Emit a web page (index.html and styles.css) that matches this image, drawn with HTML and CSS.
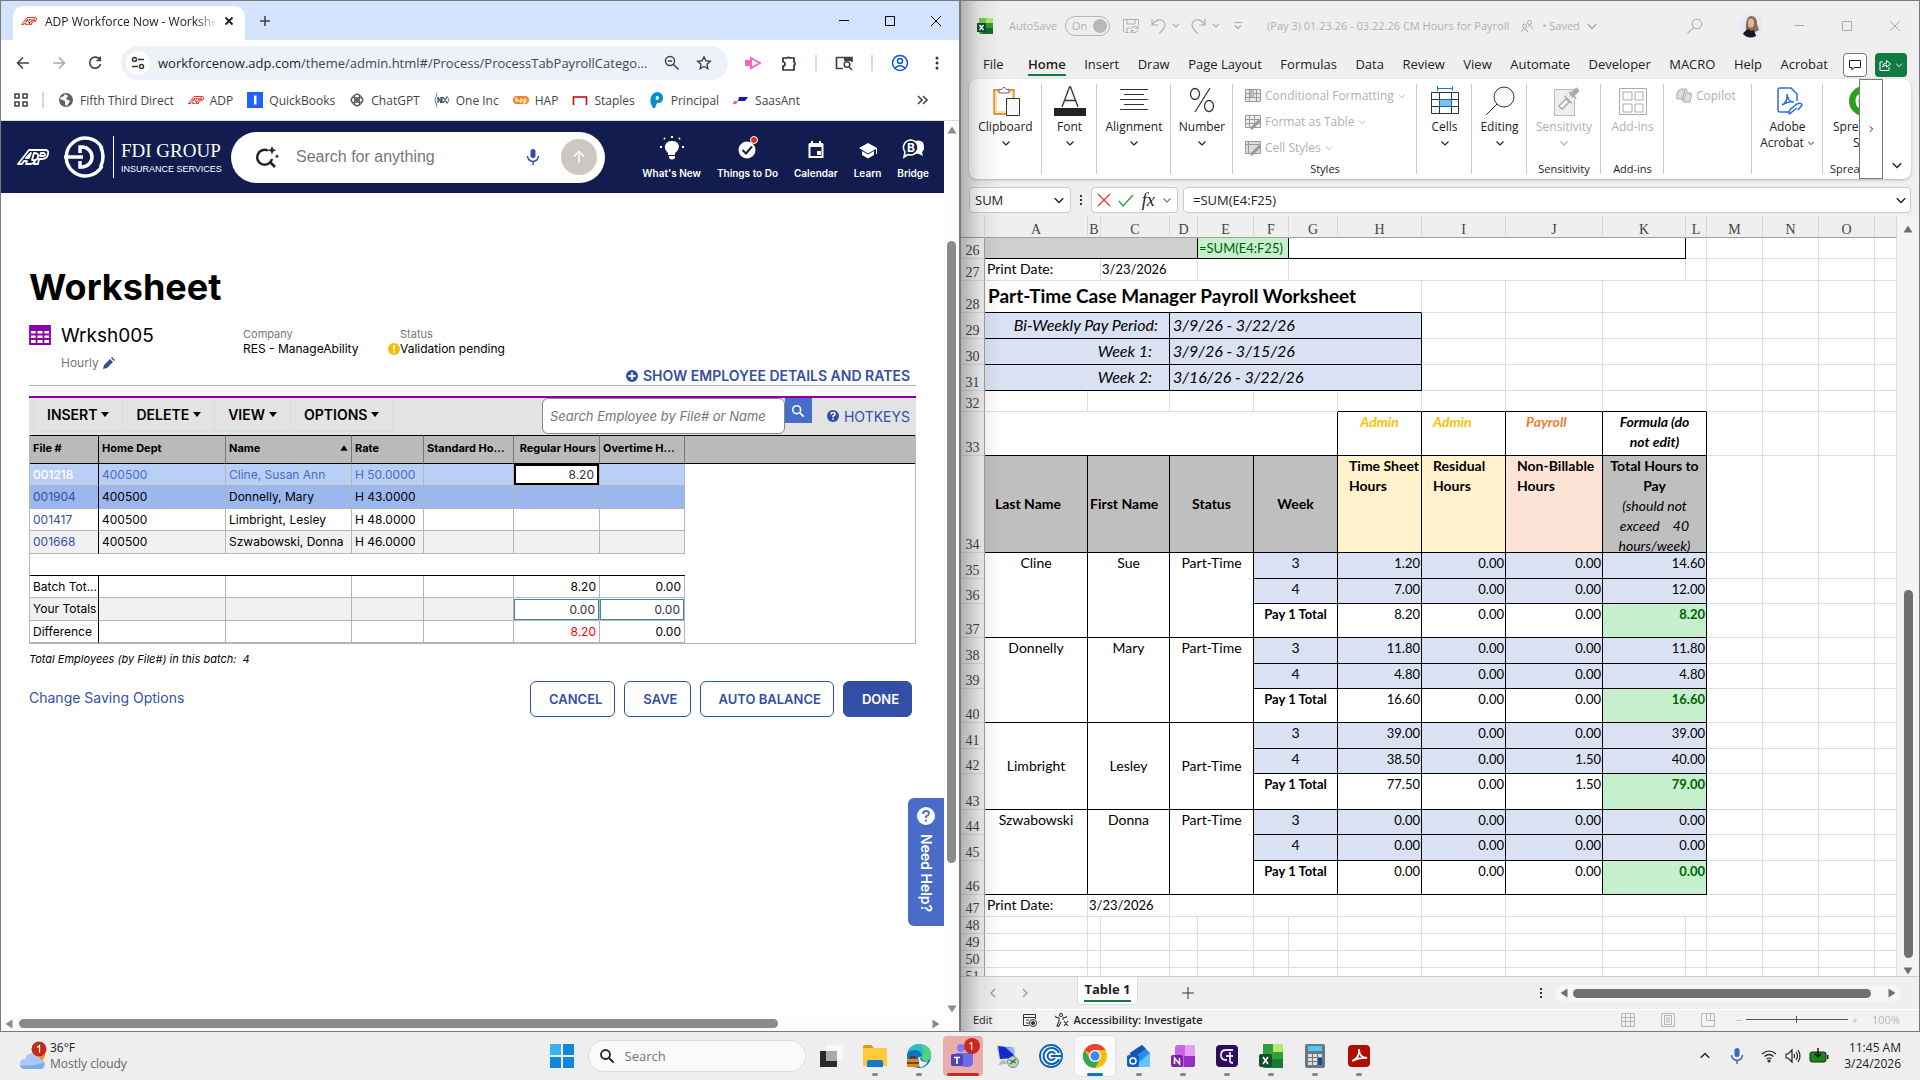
FILE: index.html
```html
<!DOCTYPE html>
<html lang="en">
<head>
<meta charset="utf-8">
<title>ADP Workforce Now - Worksheet</title>
<link rel="stylesheet" href="styles.css">
</head>
<body>
<svg class="defs" aria-hidden="true">
  <symbol id="chev" viewBox="0 0 10 10"><path d="M1.500 3.500 5 7l3.500-3.500" fill="none" stroke="currentColor" stroke-width="1.200"/></symbol>
  <symbol id="adp" viewBox="0 0 32 18"><path d="M1 16 12 2h16q4 0 3 4-1 5-6 5h-3l-1 5h-4l1-3q-2 3-5 3H9l1-3H7l-2 3zM9 10h3l2-5zM15 12q5 1 6-3t-4-4zM23 8h3q2 0 2-1.500T26 5h-2z" fill="none" stroke="currentColor" stroke-width="1.800" stroke-linejoin="round"/></symbol>
  <symbol id="lens" viewBox="0 0 16 16"><circle cx="6.500" cy="6.500" r="4.500" fill="none" stroke="currentColor" stroke-width="1.800"/><path d="m10 10 4.500 4.500" stroke="currentColor" stroke-width="2"/></symbol>
  <symbol id="mic" viewBox="0 0 16 18"><rect x="5.500" y="1" width="5" height="9" rx="2.500" fill="currentColor"/><path d="M2.500 8a5.500 5.500 0 0 0 11 0M8 13.500V17" fill="none" stroke="currentColor" stroke-width="1.500"/></symbol>
  <symbol id="tri" viewBox="0 0 10 10"><path d="M5 1.500 9.500 8.500h-9z" fill="currentColor"/></symbol>
</svg>
<main class="desktop">

<section class="window chrome">
  <div class="tabstrip">
    <div class="tab">
      <svg class="i16 red"><use href="#adp"/></svg>
      <span class="tab-title">ADP Workforce Now - Worksheet</span>
      <button class="plain" aria-label="Close tab"><svg class="i16" viewBox="0 0 16 16"><path d="m4.500 4.500 7 7m0-7-7 7" stroke="#202124" stroke-width="1.800"/></svg></button>
    </div>
    <button class="plain newtab" aria-label="New tab"><svg class="i16" viewBox="0 0 16 16"><path d="M8 3v10M3 8h10" stroke="#444" stroke-width="1.600"/></svg></button>
    <div class="winbtns">
      <button class="plain" aria-label="Minimize"><svg class="i12" viewBox="0 0 12 12"><path d="M1 5.500h10" stroke="#000"/></svg></button>
      <button class="plain" aria-label="Maximize"><svg class="i12" viewBox="0 0 12 12"><path d="M1.500 1.500h9v9h-9z" fill="none" stroke="#000"/></svg></button>
      <button class="plain" aria-label="Close"><svg class="i12" viewBox="0 0 12 12"><path d="m1 1 10 10M11 1 1 11" stroke="#000"/></svg></button>
    </div>
  </div>
  <div class="toolbar">
    <button class="plain" aria-label="Back"><svg class="i16" viewBox="0 0 16 16"><path d="M14 8H3m5-5.500L2.500 8 8 13.500" fill="none" stroke="#444" stroke-width="1.600"/></svg></button>
    <button class="plain" aria-label="Forward"><svg class="i16" viewBox="0 0 16 16"><path d="M2 8h11M8 2.500 13.500 8 8 13.500" fill="none" stroke="#aaa" stroke-width="1.600"/></svg></button>
    <button class="plain" aria-label="Reload"><svg class="i16" viewBox="0 0 16 16"><path d="M13 5a5.500 5.500 0 1 0 .5 4M13.300 1.500v4h-4" fill="none" stroke="#444" stroke-width="1.700"/></svg></button>
    <div class="omnibox">
      <span class="site"><svg class="i16" viewBox="0 0 16 16"><g fill="none" stroke="#333" stroke-width="1.500"><circle cx="4.500" cy="4.500" r="2"/><circle cx="11.500" cy="11.500" r="2"/><path d="M8 4.500h6M2 11.500h6"/></g></svg></span>
      <a class="url" href="#"><b>workforcenow.adp.com</b>/theme/admin.html#/Process/ProcessTabPayrollCatego...</a>
      <svg class="i16" viewBox="0 0 16 16"><circle cx="6" cy="6" r="4.500" fill="none" stroke="#444" stroke-width="1.500"/><path d="m9.500 9.500 5 5M4 6h4" stroke="#444" stroke-width="1.600"/></svg>
      <svg class="i16" viewBox="0 0 16 16"><path d="m8 1.800 1.900 4 4.400.500-3.300 3 .900 4.400L8 11.500l-3.900 2.200.900-4.400-3.300-3 4.400-.500z" fill="none" stroke="#444" stroke-width="1.400"/></svg>
    </div>
    <svg class="i16" viewBox="0 0 16 16"><path d="M0 5h6v6H0z" fill="#ff62c0"/><path d="m6 3 9 5-9 5z" fill="#fff" stroke="#ff62c0" stroke-width="2"/></svg>
    <svg class="i16" viewBox="0 0 16 16"><path d="M2 3h4a2 1.500 0 0 1 3 0h4v4a1.500 1.800 0 0 1 0 3.500V15H2v-4a1.800 1.800 0 0 0 0-4z" fill="none" stroke="#333" stroke-width="1.700"/></svg>
    <i class="vsep"></i>
    <svg class="i18" viewBox="0 0 18 16"><path d="M8 13.500H1.500v-11H17V7" fill="none" stroke="#444" stroke-width="1.700"/><path d="M9 2h8v4H9z" fill="#444"/><circle cx="12" cy="9.500" r="2.800" fill="none" stroke="#444" stroke-width="1.500"/><path d="m14 12 3 3" stroke="#444" stroke-width="1.600"/></svg>
    <i class="vsep"></i>
    <svg class="i18" viewBox="0 0 18 18"><g fill="none" stroke="#0b57d0" stroke-width="1.500"><circle cx="9" cy="9" r="7.500"/><circle cx="9" cy="7" r="2.500"/><path d="M4 14q5-4.500 10 0"/></g></svg>
    <svg class="i16" viewBox="0 0 16 16" fill="#333"><circle cx="8" cy="3" r="1.500"/><circle cx="8" cy="8" r="1.500"/><circle cx="8" cy="13" r="1.500"/></svg>
  </div>
  <nav class="bookmarks">
    <svg class="i14" viewBox="0 0 14 14"><path d="M1 1h4v4H1zM9 1h4v4H9zM1 9h4v4H1zM9 9h4v4H9z" fill="none" stroke="#444" stroke-width="1.600"/></svg>
    <i class="vsep"></i>
    <a href="#"><svg class="i16" viewBox="0 0 16 16"><circle cx="8" cy="8" r="7" fill="#5f6368"/><path d="M3 5q3 0 4-3l3 2-2 3 4 2-3 5-2-1V9L2 7z" fill="#fff"/></svg>Fifth Third Direct</a>
    <a href="#"><svg class="i16 red"><use href="#adp"/></svg>ADP</a>
    <a href="#"><svg class="i16" viewBox="0 0 16 16"><path d="M0 0h16v16H0z" fill="#2260ff"/><path d="M7 3.500h2.500v9H7z" fill="#fff"/></svg>QuickBooks</a>
    <a href="#"><svg class="i16" viewBox="0 0 16 16" fill="none" stroke="#555" stroke-width="1.100"><ellipse cx="8" cy="5.500" rx="2.500" ry="3.500"/><ellipse cx="8" cy="10.500" rx="2.500" ry="3.500"/><ellipse cx="5.500" cy="8" rx="3.500" ry="2.500"/><ellipse cx="10.500" cy="8" rx="3.500" ry="2.500"/><circle cx="8" cy="8" r="5.500"/></svg>ChatGPT</a>
    <a href="#"><svg class="i16" viewBox="0 0 16 16" fill="none" stroke="#4a86b8"><path d="M3 1 1 8l2 7M13 4l2 4-2 4"/><path d="M4 11V5l3 6V5m1 6V5m1 0 4 6m0-6-4 6" stroke-width="1.300" stroke="#456"/></svg>One Inc</a>
    <a href="#"><svg class="i16" viewBox="0 0 16 16"><rect y="4" width="16" height="8" rx="4" fill="#f58220"/><path d="M3 5v5m0-2q2-2 2 0v2m3-2h-1v2h2V7H7m4 5V7h2v3h-2" fill="none" stroke="#fff"/></svg>HAP</a>
    <a href="#"><svg class="i16" viewBox="0 0 16 16"><path d="M1.500 13V5h13v8" fill="none" stroke="#c00" stroke-width="1.500"/></svg>Staples</a>
    <a href="#"><svg class="i16" viewBox="0 0 16 16"><path d="M4 16Q0 10 2 5q2-5 7-5 5 1 5 6t-5 5H8l-2 5zM8 4q-2 0-1 4 3 0 3-2 0-2-2-2" fill="#0091cd" fill-rule="evenodd"/></svg>Principal</a>
    <a href="#"><svg class="i16" viewBox="0 0 16 16"><path d="M6 5h9l-3 4H5z" fill="#11c"/><path d="M1 9h4l-2 3H0z" fill="#ff4fb0"/></svg>SaasAnt</a>
    <svg class="i16 more" viewBox="0 0 16 16"><path d="m3 4 4 4-4 4m5-8 4 4-4 4" fill="none" stroke="#444" stroke-width="1.600"/></svg>
  </nav>

  <div class="viewport">
    <div class="page">
      <header class="adphead">
        <svg class="adplogo"><use href="#adp"/></svg>
        <svg class="fdi" viewBox="0 0 42 42"><g fill="none" stroke="#fff"><path d="M38 12A19 19 0 1 0 38 30M36.500 10q5 11 0 21" stroke-width="3.500"/><path d="M0 21h19M16 17v-6h2a10 10 0 0 1 0 20h-2v-6" stroke-width="3.500"/></g></svg>
        <div class="brand"><strong>FDI GROUP</strong><span>INSURANCE SERVICES</span></div>
        <div class="asksearch">
          <svg class="i24" viewBox="0 0 24 24"><path d="M13 5.500A7.500 7.500 0 1 0 17 14M15 17l5 5" fill="none" stroke="#222" stroke-width="2.500"/><path d="m17 1 1.200 3 3 1.200-3 1.200L17 9.500l-1.200-3.100-3-1.200 3-1.200zM22 9l.7 1.500 1.300.7-1.300.7L22 13.500l-.7-1.600-1.300-.7 1.300-.7z" fill="#222"/></svg>
          <input type="text" placeholder="Search for anything" aria-label="Search for anything">
          <svg class="askmic"><use href="#mic"/></svg>
          <button class="go" aria-label="Submit"><svg class="i16" viewBox="0 0 16 16"><path d="M8 14V3M3 7.500l5-5 5 5" fill="none" stroke="#fff" stroke-width="1.500"/></svg></button>
        </div>
        <nav class="headnav">
          <a href="#"><svg class="i26" viewBox="0 0 26 26"><path d="M9 18Q5 14 6 11q1-5 7-5t7 5q0 4-4 7v2H9zM10 21h6v2q-3 3-6 0z" fill="#fff"/><path d="M13 1v2M5 3l1 1M21 3l-1 1M1 12h2M23 12h2" stroke="#fff" stroke-width="2"/></svg>What's New</a>
          <a href="#"><svg class="i26" viewBox="0 0 26 26"><circle cx="13" cy="15" r="8.500" fill="#fff"/><path d="m8.500 15 3.500 3.500 6-7" fill="none" stroke="#131c4e" stroke-width="2"/><circle cx="20" cy="5" r="3.500" fill="#d2321e" stroke="#fff"/></svg>Things to Do</a>
          <a href="#"><svg class="i26" viewBox="0 0 26 26"><path d="M6.500 10h13v12h-13z" fill="none" stroke="#fff" stroke-width="2"/><path d="M6 8h14v4H6zM8 6h2v3H8zM16 6h2v3h-2zM14 16h4v4h-4z" fill="#fff"/></svg>Calendar</a>
          <a href="#"><svg class="i26" viewBox="0 0 26 26"><path d="m4 13 9-5 9 5v6h-1v-5l-8 4.500zM7 16l6 3.500 6-3.500v4l-6 3.500L7 20z" fill="#fff"/></svg>Learn</a>
          <a href="#"><svg class="i26" viewBox="0 0 26 26"><path d="M15 6q9-2 9 6 0 4-2 5l1 4-4-2-5-1z" fill="#fff"/><path d="M11 5a7.500 7.500 0 1 1-3 14.500L4 22l1-5A7.500 7.500 0 0 1 11 5z" fill="#131c4e" stroke="#fff" stroke-width="1.600"/><text x="11" y="17" text-anchor="middle" font-family="Inter,sans-serif" font-weight="700" font-size="12" fill="#fff">B</text></svg>Bridge</a>
        </nav>
      </header>
      <div class="content">
        <h1>Worksheet</h1>
        <div class="meta">
          <svg class="sheeticon" viewBox="0 0 22 20"><path d="M1 1h20v18H1zM1 5h20M1 9.500h20M1 14h20M7.500 3v16M14.500 3v16" fill="none" stroke="#8a00a8" stroke-width="1.800"/><path d="M1 1h20v3H1z" fill="#8a00a8"/></svg>
          <div class="wname"><h2>Wrksh005</h2><p>Hourly <svg class="i12" viewBox="0 0 12 12"><path d="m0 12 1-4 6-6 3 3-6 6zM8 1l1-1 3 3-1 1z" fill="#334fa5"/></svg></p></div>
          <dl class="company"><dt>Company</dt><dd>RES - ManageAbility</dd></dl>
          <dl class="status"><dt>Status</dt><dd><svg class="warn" viewBox="0 0 12 12"><circle cx="6" cy="6" r="6" fill="#fbb900"/><path d="M6 2v5M6 8v2" stroke="#fff" stroke-width="1.800"/></svg>Validation pending</dd></dl>
        </div>
        <div class="showrow"><a href="#"><svg class="i12" viewBox="0 0 12 12"><circle cx="6" cy="6" r="6" fill="#334fa5"/><path d="M6 2.500v7M2.500 6h7" stroke="#fff" stroke-width="1.800"/></svg>SHOW EMPLOYEE DETAILS AND RATES</a></div>
        <div class="gridbar">
          <button>INSERT<i></i></button><button>DELETE<i></i></button><button>VIEW<i></i></button><button>OPTIONS<i></i></button>
          <input type="text" placeholder="Search Employee by File# or Name" aria-label="Search employee">
          <button class="find" aria-label="Search"><svg class="i14"><use href="#lens"/></svg></button>
          <a href="#"><svg class="i12" viewBox="0 0 12 12"><circle cx="6" cy="6" r="6" fill="#334fa5"/><path d="M4 4.500q0-2 2-2t2 1.700Q8 5.300 6.100 6v1.200M6 8.300v1.500" fill="none" stroke="#fff" stroke-width="1.500"/></svg>HOTKEYS</a>
        </div>
        <div class="gridbox">
          <table class="wtable">
            <colgroup><col class="w1"><col class="w2"><col class="w3"><col class="w4"><col class="w5"><col class="w6"><col class="w7"><col></colgroup>
            <thead><tr><th>File #</th><th>Home Dept</th><th><span class="sort">Name<svg class="i8"><use href="#tri"/></svg></span></th><th>Rate</th><th>Standard Ho...</th><th class="r">Regular Hours</th><th>Overtime H...</th><th></th></tr></thead>
            <tbody>
            <tr class="sel"><td><a href="#">001218</a></td><td>400500</td><td>Cline, Susan Ann</td><td>H 50.0000</td><td></td><td class="edit"><input type="text" value="8.20" aria-label="Regular hours"></td><td></td></tr>
            <tr class="hov"><td><a href="#">001904</a></td><td>400500</td><td>Donnelly, Mary</td><td>H 43.0000</td><td></td><td></td><td></td></tr>
            <tr><td><a href="#">001417</a></td><td>400500</td><td>Limbright, Lesley</td><td>H 48.0000</td><td></td><td></td><td></td></tr>
            <tr class="alt"><td><a href="#">001668</a></td><td>400500</td><td>Szwabowski, Donna</td><td>H 46.0000</td><td></td><td></td><td></td></tr>
            <tr class="blank"><td colspan="7"></td></tr>
            <tr class="total"><td>Batch Tot...</td><td></td><td></td><td></td><td></td><td class="r">8.20</td><td class="r">0.00</td></tr>
            <tr class="alt"><td>Your Totals</td><td></td><td></td><td></td><td></td><td class="mine"><input type="text" value="0.00" aria-label="Your regular total"></td><td class="mine"><input type="text" value="0.00" aria-label="Your overtime total"></td></tr>
            <tr><td>Difference</td><td></td><td></td><td></td><td></td><td class="r neg">8.20</td><td class="r">0.00</td></tr>
            </tbody>
          </table>
        </div>
        <p class="count">Total Employees (by File#) in this batch:&nbsp; 4</p>
        <div class="actions"><a href="#">Change Saving Options</a><button>CANCEL</button><button>SAVE</button><button>AUTO BALANCE</button><button class="primary">DONE</button></div>
      </div>
      <button class="help"><svg class="i18" viewBox="0 0 18 18"><circle cx="9" cy="9" r="9" fill="#fff"/><path d="M6 7q0-3 3-3t3 2.500Q12 8 9 9.500V11M9 12.500v2" fill="none" stroke="#486cc8" stroke-width="1.800"/></svg><span>Need Help?</span></button>
    </div>
    <div class="vbar"><svg class="i10"><use href="#tri"/></svg><i></i><svg class="i10 down"><use href="#tri"/></svg></div>
    <div class="hbar"><svg class="i10 left"><use href="#tri"/></svg><i></i><svg class="i10 right"><use href="#tri"/></svg></div>
  </div>
</section>

<section class="window excel">
  <div class="xtitle">
    <svg class="i16" viewBox="0 0 16 16"><path d="M2 2q0-2 2-2h12v16H4q-2 0-2-2z" fill="#2f9e3f"/><path d="M9 0h7v5H9z" fill="#b5e86a"/><path d="M2 0h7v5H2z" fill="#6fcf56"/><path d="M9 10h7v6H5z" fill="#146b2e"/><path d="M0 5h9v9H0z" fill="#10512c"/><path d="m2.500 7 4 5m0-5-4 5" stroke="#fff" stroke-width="1.400"/></svg>
    <label class="auto">AutoSave<span class="toggle">On<input type="checkbox" checked></span></label>
    <svg class="i16" viewBox="0 0 16 16" fill="none" stroke="#b0b0b0"><path d="M6 14.500H2L.500 13V1.500h15V7M4 2v4h8V2M4 14v-4h3"/><path d="M8 11q1-3 4-2.500 2 0 3 2m0-3v3h-3m3 1.500q-1 3-4 2.500-2 0-3-2m0 3v-3h3"/></svg>
    <svg class="undo" viewBox="0 0 28 16" fill="none" stroke="#b0b0b0" stroke-width="1.200"><path d="M1 1v6h6M1 7q4-6 9-5 4 1 4 5 0 3-6 9M22 6l3 3 3-3"/></svg>
    <svg class="undo" viewBox="0 0 28 16" fill="none" stroke="#b0b0b0" stroke-width="1.200"><path d="M14 1v6H8M14 7q-4-6-9-5-4 1-4 5 0 3 6 9M22 6l3 3 3-3"/></svg>
    <svg class="i10 qat" viewBox="0 0 10 10"><path d="M1 1.500h8M2 4.500l3 3 3-3" fill="none" stroke="#aaa" stroke-width="1.200"/></svg>
    <span class="doc">(Pay 3) 01.23.26 - 03.22.26 CM Hours for Payroll</span>
    <svg class="i12" viewBox="0 0 12 12" fill="none" stroke="#aaa"><circle cx="8.500" cy="2.500" r="2"/><circle cx="3.500" cy="6" r="2"/><path d="M.500 12q0-3 3-3t3 3M7 6q4-1 4.500 3"/></svg>
    <span class="saved">• Saved</span>
    <svg class="i12 pale"><use href="#chev"/></svg>
    <div class="xright">
      <svg class="i16" viewBox="0 0 16 16" fill="none" stroke="#b5b5b5" stroke-width="1.200"><circle cx="10" cy="6" r="4.800"/><path d="M6.500 9.500.500 15.500"/></svg>
      <svg class="avatar" viewBox="0 0 24 24"><circle cx="12" cy="12" r="12" fill="#e6e8f2"/><path d="M7 17Q6 3 12 2q6 0 6 8l2 6-4 2z" fill="#8b6a50"/><ellipse cx="12" cy="9" rx="3" ry="4.500" fill="#e6b79c"/><path d="M4 20q1-3 6-5l2 2 3-1 2 6q-7 4-13-2" fill="#11182c"/></svg>
      <button class="plain" aria-label="Minimize"><svg class="i12" viewBox="0 0 12 12"><path d="M1 5.500h10" stroke="#aaa"/></svg></button>
      <button class="plain" aria-label="Maximize"><svg class="i12" viewBox="0 0 12 12"><path d="M1.500 1.500h9v9h-9z" fill="none" stroke="#aaa"/></svg></button>
      <button class="plain" aria-label="Close"><svg class="i12" viewBox="0 0 12 12"><path d="m1 1 10 10M11 1 1 11" stroke="#aaa"/></svg></button>
    </div>
  </div>
  <div class="xmenu">
    <nav><a href="#" class="file">File</a><a href="#" class="on">Home</a><a href="#">Insert</a><a href="#">Draw</a><a href="#">Page Layout</a><a href="#">Formulas</a><a href="#">Data</a><a href="#">Review</a><a href="#">View</a><a href="#">Automate</a><a href="#">Developer</a><a href="#">MACRO</a><a href="#">Help</a><a href="#">Acrobat</a></nav>
    <button class="cmt" aria-label="Comments"><svg class="i12" viewBox="0 0 12 12"><path d="M.500 1.500h11v7H5L3 11V8.500H.500z" fill="none" stroke="#222"/></svg></button>
    <button class="share" aria-label="Share"><svg class="i12" viewBox="0 0 12 12"><path d="M4 3H1v8.500h9V8M3.500 8q0-4 4-4V1.500L11.500 5 7.500 8V6Q5 6 3.500 8z" fill="none" stroke="#fff"/></svg><svg class="i8"><use href="#chev"/></svg></button>
  </div>
  <div class="ribbon">
    <button class="g g1"><svg class="i30" viewBox="0 0 30 30"><path d="M3 4h20v24H3z" fill="#ffe1a0" stroke="#e07b10" stroke-width="1.300"/><path d="M6 7h14v18H6z" fill="#fff"/><path d="M8 7V3.500h2.500Q13-1 15.500 3.500H18V7z" fill="#fff" stroke="#666"/><path d="M15.500 12.500h13v17h-13z" fill="#f8f8f8" stroke="#333"/></svg>Clipboard<svg class="i10"><use href="#chev"/></svg></button>
    <button class="g g2"><svg class="i32" viewBox="0 0 32 30"><path d="m8 21 7.500-20h1L24 21M11 14.500h10" fill="none" stroke="#333" stroke-width="1.300"/><path d="M0 22h32v8H0z" fill="#222"/></svg>Font<svg class="i10"><use href="#chev"/></svg></button>
    <button class="g g3"><svg class="i30" viewBox="0 0 30 30"><path d="M1 3.500h28M5 8.500h20M1 13.500h28M5 18.500h20M1 23.500h28" stroke="#333"/></svg>Alignment<svg class="i10"><use href="#chev"/></svg></button>
    <button class="g g4"><svg class="i30" viewBox="0 0 30 30" fill="none" stroke="#333" stroke-width="1.300"><ellipse cx="8" cy="8" rx="4.500" ry="5.500"/><ellipse cx="22" cy="20" rx="4.500" ry="5.500"/><path d="M23 2 8 26"/></svg>Number<svg class="i10"><use href="#chev"/></svg></button>
    <div class="g g5">
      <button><svg class="i16" viewBox="0 0 16 16"><path d="M.500 1.500h15v12H.500zM.500 5.500h15m-15 4h15m-11-8v12m7-12v12" fill="#e8e8e8" stroke="#999"/><path d="M5 2h4v7H5z" fill="#bbb"/></svg>Conditional Formatting<svg class="i8"><use href="#chev"/></svg></button>
      <button><svg class="i16" viewBox="0 0 16 16"><path d="M.500 1.500h15v12H.500zM.500 5.500h15m-15 4h15m-11-8v12m5-12v12" fill="#eee" stroke="#999"/><path d="m6 15 9-9" stroke="#999" stroke-width="3"/></svg>Format as Table<svg class="i8"><use href="#chev"/></svg></button>
      <button><svg class="i16" viewBox="0 0 16 16"><path d="M.500 1.500h15v12H.500zM.500 4.500h15m-12-3v12" fill="#ddd" stroke="#999"/><path d="m6 15 9-9" stroke="#999" stroke-width="3"/></svg>Cell Styles<svg class="i8"><use href="#chev"/></svg></button>
      <span class="cap">Styles</span>
    </div>
    <button class="g g6"><svg class="i30" viewBox="0 0 30 30"><path d="M1.500 6.500h27v21h-27zM1.500 13.500h27m-27 7h27m-19-14v21m12-21v21" fill="#fff" stroke="#333"/><path d="M9.500 13.500h12v7h-12z" fill="#83bdec" stroke="#0f6cbd"/><path d="M7 2.500h16M7.500 0v5m15-5v5" stroke="#0f83bd"/></svg>Cells<svg class="i10"><use href="#chev"/></svg></button>
    <button class="g g7"><svg class="i30" viewBox="0 0 30 30" fill="none" stroke="#333"><circle cx="19" cy="11" r="10" fill="#fafafa"/><path d="M12 18 1 29"/></svg>Editing<svg class="i10"><use href="#chev"/></svg></button>
    <button class="g g8 off"><svg class="i30" viewBox="0 0 30 30"><path d="M5.500 3.500h20v26h-20z" fill="#eee" stroke="#bbb"/><path d="m18 8 7 7" stroke="#aaa" stroke-width="8"/><path d="m18 8 7 7" stroke="#eee" stroke-width="5"/><path d="m22 10 7-7" stroke="#aaa" stroke-width="5"/><path d="m11 22 8-8" stroke="#aaa" stroke-width="6"/><path d="m12 21 6-6" stroke="#fff" stroke-width="3"/></svg>Sensitivity<svg class="i10"><use href="#chev"/></svg><span class="cap">Sensitivity</span></button>
    <button class="g g9 off"><svg class="i30" viewBox="0 0 30 30"><path d="M1.500 2.500h27v26h-27zM5 6h9v8H5zM17 6h8v8h-8zM5 18h9v8H5zM17 18h8v8h-8z" fill="none" stroke="#aaa"/></svg>Add-ins<span class="cap">Add-ins</span></button>
    <div class="g g10"><button class="off"><svg class="i16" viewBox="0 0 16 16"><path d="M5 1h5l2 4h3q1 3-1 9H8l-2-3H1Q0 7 2 3zM6 11l3-9M10 5 7 14" fill="#ddd" stroke="#aaa"/></svg>Copilot</button></div>
    <button class="g g11"><svg class="i30" viewBox="0 0 30 30" fill="none" stroke="#2a6fe0" stroke-width="1.500"><path d="M16 26H7q-2 0-2-2V4q0-2 2-2h11l6 6v7"/><path d="M9 19q6-3 5-11 1 8 7 8-5-1-12 3"/><path d="m19 22 5-4q4-2 5 1l-4 5m-1-2-5 4q-3 3-3 1 0-3 4-6"/></svg>Adobe<span>Acrobat <svg class="i8"><use href="#chev"/></svg></span></button>
    <div class="g g12"><svg class="i30" viewBox="0 0 30 30"><circle cx="15" cy="15" r="15" fill="#2ca01c"/><path d="M14 9q-6 0-6 6t6 6" fill="none" stroke="#fff" stroke-width="3"/></svg><span>Spreadsheet</span><span class="l2">Sync</span><span class="cap">Spreadsheet</span></div>
    <button class="scroll" aria-label="More commands"><svg class="i8"><use href="#chev"/></svg></button>
    <button class="collapse" aria-label="Collapse ribbon"><svg class="i12"><use href="#chev"/></svg></button>
  </div>
  <div class="fbar">
    <div class="box name"><input type="text" value="SUM" aria-label="Name box"><svg class="i12"><use href="#chev"/></svg></div>
    <svg class="dots" viewBox="0 0 4 12" fill="#333"><path d="M1 1h2v2H1zM1 5h2v2H1zM1 9h2v2H1z"/></svg>
    <div class="box fx"><svg class="i14" viewBox="0 0 14 14"><path d="m1 1 12 12M13 1 1 13" stroke="#e33" stroke-width="1.200"/></svg><svg class="i16" viewBox="0 0 16 14"><path d="m1 8 4 5L15 2" fill="none" stroke="#2a9a4a" stroke-width="1.300"/></svg><em>fx</em><svg class="i10"><use href="#chev"/></svg></div>
    <div class="box formula"><input type="text" value="=SUM(E4:F25)" aria-label="Formula"><svg class="i12"><use href="#chev"/></svg></div>
  </div>
  <div class="sheetarea">
  <div class="sheet">
    <table class="xl">
      <colgroup><col class="c0"><col class="cA"><col class="cB"><col class="cC"><col class="cD"><col class="cE"><col class="cF"><col class="cG"><col class="cH"><col class="cH"><col class="cJ"><col class="cK"><col class="cL"><col class="cE"><col class="cE"><col class="cE"><col></colgroup>
      <thead><tr><th></th><th>A</th><th>B</th><th>C</th><th>D</th><th>E</th><th>F</th><th>G</th><th>H</th><th>I</th><th>J</th><th>K</th><th>L</th><th>M</th><th>N</th><th>O</th><th></th></tr></thead>
      <tbody>
      <tr class="h21"><th>26</th><td colspan="4" class="k lock"></td><td colspan="2" class="k green date">=SUM(E4:F25)</td><td colspan="5" class="k"></td><td></td><td></td><td></td><td></td><td></td></tr>
      <tr class="h22"><th>27</th><td colspan="2">Print Date:</td><td colspan="2" class="date">3/23/2026</td><td colspan="2"></td><td colspan="5"></td><td></td><td></td><td></td><td></td><td></td></tr>
      <tr class="h32"><th>28</th><td colspan="8" class="kb title">Part-Time Case Manager Payroll Worksheet</td><td></td><td></td><td colspan="2"></td><td></td><td></td><td></td><td></td></tr>
      <tr class="h26"><th>29</th><td colspan="3" class="k in per wk">Bi-Weekly Pay Period:</td><td colspan="5" class="k in per">3/9/26 - 3/22/26</td><td></td><td></td><td colspan="2"></td><td></td><td></td><td></td><td></td></tr>
      <tr class="h26"><th>30</th><td colspan="3" class="k in per wk wn">Week 1:</td><td colspan="5" class="k in per">3/9/26 - 3/15/26</td><td></td><td></td><td colspan="2"></td><td></td><td></td><td></td><td></td></tr>
      <tr class="h26"><th>31</th><td colspan="3" class="k in per wk wn">Week 2:</td><td colspan="5" class="k in per">3/16/26 - 3/22/26</td><td></td><td></td><td colspan="2"></td><td></td><td></td><td></td><td></td></tr>
      <tr class="h21"><th>32</th><td></td><td colspan="2"></td><td colspan="2"></td><td colspan="2"></td><td class="kb"></td><td class="kb"></td><td class="kb"></td><td colspan="2" class="kb"></td><td></td><td></td><td></td><td></td></tr>
      <tr class="h44"><th>33</th><td colspan="7" class="k"></td><td class="k who adm c">Admin</td><td class="k who adm p">Admin</td><td class="k who pay p">Payroll</td><td colspan="2" class="k who c">Formula (do<br>not edit)</td><td></td><td></td><td></td><td></td></tr>
      <tr class="h97"><th>34</th><td class="k hd">Last Name</td><td colspan="2" class="k hd l">First Name</td><td colspan="2" class="k hd">Status</td><td colspan="2" class="k hd">Week</td><td class="k top yel">Time Sheet<br>Hours</td><td class="k top yel">Residual<br>Hours</td><td class="k top pch">Non-Billable<br>Hours</td><td colspan="2" class="k top tot"><div>Total Hours to<br>Pay<br><i>(should not<br>exceed &nbsp; &nbsp;40<br>hours/week)</i></div></td><td></td><td></td><td></td><td></td></tr>
      <tr class="h26"><th>35</th><td rowspan="3" class="k c">Cline</td><td rowspan="3" colspan="2" class="k c">Sue</td><td rowspan="3" colspan="2" class="k c">Part-Time</td><td colspan="2" class="k in c">3</td><td class="k in n">1.20</td><td class="k in n">0.00</td><td class="k in n">0.00</td><td colspan="2" class="k in n">14.60</td><td></td><td></td><td></td><td></td></tr>
      <tr class="h25"><th>36</th><td colspan="2" class="k in c">4</td><td class="k in n">7.00</td><td class="k in n">0.00</td><td class="k in n">0.00</td><td colspan="2" class="k in n">12.00</td><td></td><td></td><td></td><td></td></tr>
      <tr class="h34"><th>37</th><td colspan="2" class="k c b">Pay 1 Total</td><td class="k n">8.20</td><td class="k n">0.00</td><td class="k n">0.00</td><td colspan="2" class="k n green b">8.20</td><td></td><td></td><td></td><td></td></tr>
      <tr class="h26"><th>38</th><td rowspan="3" class="k c over">Donnelly</td><td rowspan="3" colspan="2" class="k c over">Mary</td><td rowspan="3" colspan="2" class="k c">Part-Time</td><td colspan="2" class="k in c">3</td><td class="k in n">11.80</td><td class="k in n">0.00</td><td class="k in n">0.00</td><td colspan="2" class="k in n">11.80</td><td></td><td></td><td></td><td></td></tr>
      <tr class="h25"><th>39</th><td colspan="2" class="k in c">4</td><td class="k in n">4.80</td><td class="k in n">0.00</td><td class="k in n">0.00</td><td colspan="2" class="k in n">4.80</td><td></td><td></td><td></td><td></td></tr>
      <tr class="h34"><th>40</th><td colspan="2" class="k c b">Pay 1 Total</td><td class="k n">16.60</td><td class="k n">0.00</td><td class="k n">0.00</td><td colspan="2" class="k n green b">16.60</td><td></td><td></td><td></td><td></td></tr>
      <tr class="h26"><th>41</th><td rowspan="3" class="k c mid">Limbright</td><td rowspan="3" colspan="2" class="k c mid">Lesley</td><td rowspan="3" colspan="2" class="k c mid">Part-Time</td><td colspan="2" class="k in c">3</td><td class="k in n">39.00</td><td class="k in n">0.00</td><td class="k in n">0.00</td><td colspan="2" class="k in n">39.00</td><td></td><td></td><td></td><td></td></tr>
      <tr class="h25"><th>42</th><td colspan="2" class="k in c">4</td><td class="k in n">38.50</td><td class="k in n">0.00</td><td class="k in n">1.50</td><td colspan="2" class="k in n">40.00</td><td></td><td></td><td></td><td></td></tr>
      <tr class="h36"><th>43</th><td colspan="2" class="k c b">Pay 1 Total</td><td class="k n">77.50</td><td class="k n">0.00</td><td class="k n">1.50</td><td colspan="2" class="k n green b">79.00</td><td></td><td></td><td></td><td></td></tr>
      <tr class="h25"><th>44</th><td rowspan="3" class="k c over">Szwabowski</td><td rowspan="3" colspan="2" class="k c">Donna</td><td rowspan="3" colspan="2" class="k c">Part-Time</td><td colspan="2" class="k in c">3</td><td class="k in n">0.00</td><td class="k in n">0.00</td><td class="k in n">0.00</td><td colspan="2" class="k in n">0.00</td><td></td><td></td><td></td><td></td></tr>
      <tr class="h26"><th>45</th><td colspan="2" class="k in c">4</td><td class="k in n">0.00</td><td class="k in n">0.00</td><td class="k in n">0.00</td><td colspan="2" class="k in n">0.00</td><td></td><td></td><td></td><td></td></tr>
      <tr class="h34"><th>46</th><td colspan="2" class="k c b">Pay 1 Total</td><td class="k n">0.00</td><td class="k n">0.00</td><td class="k n">0.00</td><td colspan="2" class="k n green b">0.00</td><td></td><td></td><td></td><td></td></tr>
      <tr class="h22"><th>47</th><td>Print Date:</td><td colspan="2" class="date">3/23/2026</td><td colspan="2"></td><td colspan="2"></td><td></td><td></td><td></td><td colspan="2"></td><td></td><td></td><td></td><td></td></tr>
      <tr class="h17"><th>48</th><td></td><td></td><td></td><td></td><td></td><td></td><td></td><td></td><td></td><td></td><td></td><td></td><td></td><td></td><td></td><td></td></tr>
      <tr class="h17"><th>49</th><td></td><td></td><td></td><td></td><td></td><td></td><td></td><td></td><td></td><td></td><td></td><td></td><td></td><td></td><td></td><td></td></tr>
      <tr class="h17"><th>50</th><td></td><td></td><td></td><td></td><td></td><td></td><td></td><td></td><td></td><td></td><td></td><td></td><td></td><td></td><td></td><td></td></tr>
      <tr class="h17"><th>51</th><td></td><td></td><td></td><td></td><td></td><td></td><td></td><td></td><td></td><td></td><td></td><td></td><td></td><td></td><td></td><td></td></tr>
      </tbody>
    </table>
  </div>
  <div class="xvbar"><svg class="i10"><use href="#tri"/></svg><i></i><svg class="i10 down"><use href="#tri"/></svg></div>
  </div>
  <div class="tabsbar">
    <button class="plain" aria-label="Previous sheet"><svg class="i12" viewBox="0 0 12 12"><path d="M8 2 4 6l4 4" fill="none" stroke="#999" stroke-width="1.300"/></svg></button>
    <button class="plain" aria-label="Next sheet"><svg class="i12" viewBox="0 0 12 12"><path d="m4 2 4 4-4 4" fill="none" stroke="#999" stroke-width="1.300"/></svg></button>
    <a class="sheettab" href="#"><span>Table 1</span></a>
    <button class="plain addsheet" aria-label="Add sheet"><svg class="i12" viewBox="0 0 12 12"><path d="M6 0v12M0 6h12" stroke="#333"/></svg></button>
    <svg class="dots" viewBox="0 0 4 12" fill="#333"><path d="M1 1h2v2H1zM1 5h2v2H1zM1 9h2v2H1z"/></svg>
    <div class="xhbar"><svg class="i10 left"><use href="#tri"/></svg><i></i><svg class="i10 right"><use href="#tri"/></svg></div>
  </div>
  <div class="statusbar">
    <span>Edit</span>
    <svg class="i14" viewBox="0 0 14 14" fill="none" stroke="#333"><path d="M6 12.500H.500v-11h12V6M.500 4.500h12M3 7h3M3 10h3"/><circle cx="10" cy="10" r="3.500"/><circle cx="10" cy="10" r="1.500" fill="#333"/></svg>
    <svg class="i14" viewBox="0 0 14 14" fill="none" stroke="#333" stroke-width="1.100"><circle cx="6" cy="2" r="1.500"/><path d="M1 3q-1 1 1 1.500l2 .500v3l-2 5 1.500.500L6 9m5-6q1 1-1 1.500L8 5v2M9 8l4 5m0-5-4 5"/></svg>
    <b>Accessibility: Investigate</b>
    <div class="views">
      <svg class="i14" viewBox="0 0 14 14" fill="none" stroke="#b5b5b5"><path d="M.500.500h13v13H.500zM.500 4.500h13m-13 4h13M4.500.500v13m5-13v13"/></svg>
      <svg class="i14" viewBox="0 0 14 14" fill="none" stroke="#b5b5b5"><path d="M.500.500h13v13H.500zM3.500 2.500h7v9h-7zM5 5h4M5 7h4M5 9h4"/></svg>
      <svg class="i14" viewBox="0 0 14 14" fill="none" stroke="#b5b5b5"><path d="M.500.500h13v13H.500zM5.500.500v7h8M9.500.500v7"/></svg>
      <div class="zoom"><span>−</span><input type="range" aria-label="Zoom"><span>+</span></div>
      <span>100%</span>
    </div>
  </div>
</section>
</main>

<footer class="taskbar">
  <div class="weather">
    <svg class="cloud" viewBox="0 0 28 30"><circle cx="20" cy="14" r="6" fill="#ff8a1f"/><path d="M7 28q-6 0-6-5t5-5q2-6 8-6 6 1 7 6 5 1 5 5t-5 5z" fill="#a9c8f5"/><path d="M7 28q-6 0-6-4 8 2 24-2 1 6-4 6z" fill="#7fa9ea"/><circle cx="20" cy="8" r="7.500" fill="#c42b1c"/><path d="M18 6.500 20.500 4.500v7" fill="none" stroke="#fff" stroke-width="1.200"/></svg>
    <div><span>36°F</span><span class="dim">Mostly cloudy</span></div>
  </div>
  <div class="apps">
    <button class="app start" aria-label="Start"><svg class="i24" viewBox="0 0 24 24"><path d="M0 0h11v11H0zM13 0h11v11H13zM0 13h11v11H0zM13 13h11v11H13z" fill="#1187dc"/><path d="M0 0h11v11H0z" fill="#35b3f2"/></svg></button>
    <label class="tsearch"><svg class="i16"><use href="#lens"/></svg><input type="text" placeholder="Search" aria-label="Search"></label>
    <button class="app" aria-label="Task view"><svg class="i24" viewBox="0 0 24 24"><path d="M7 1h17v16H7z" fill="#f8f8f8"/><path d="M1 7h17v16H1z" fill="#2a2a2a"/><path d="M7 7h11v10H7z" fill="#aaa"/></svg></button>
    <button class="app run" aria-label="File Explorer"><svg class="i24" viewBox="0 0 24 24"><path d="M0 3q0-2 2-2h6l3 3H0z" fill="#d99a00"/><path d="M0 4h22q2 0 2 2v16H0z" fill="#ffcb3d"/><path d="M4 23v-5q0-2 2-2h12q2 0 2 2v5z" fill="#1778c8"/></svg></button>
    <button class="app run" aria-label="Edge"><svg class="i24" viewBox="0 0 24 24"><circle cx="12" cy="12" r="12" fill="#1272bd"/><path d="M1 8Q4 0 12 0q12 1 12 11 0 6-6 6-5-1-3-5 0-5-6-6-5 0-8 2z" fill="#2bbfc4"/><path d="M14 0q10 2 10 11 0 6-6 6-5-1-3-5 4-5-1-12" fill="#4fd47c"/><path d="M14 12q-3 5 4 6l3-1q-3 6-8 6-3-5-2-9z" fill="#e6f1fa"/><path d="M0 15h12v8H0z" fill="#d98a1c"/><path d="M0 19h12M4 15v-2h4v2" fill="none" stroke="#5c2e05" stroke-width="1.300"/></svg></button>
    <button class="app alert" aria-label="Teams"><svg class="i24" viewBox="0 0 24 24"><circle cx="10" cy="4" r="4" fill="#7a7ff0"/><path d="M5 9h17v9q0 5-6 5T5 18z" fill="#6d6be8"/><rect y="10" width="12" height="12" rx="2" fill="#4b45b5"/><path d="M3 13.500h6m-3 0V20" stroke="#fff" stroke-width="1.600"/></svg><span class="badge">1</span></button>
    <button class="app" aria-label="Remote Desktop"><svg class="i24" viewBox="0 0 24 24"><path d="m1 1 19 2 1 12-17 1z" fill="#d5d8da"/><path d="m3 2 15 2 1 10-14 1z" fill="#1528c8"/><path d="m10 3 8 1 1 7z" fill="#89b4ff"/><path d="m7 16 5 1-1 3-8 1z" fill="#bbb"/><circle cx="18" cy="18" r="5.500" fill="#c5ccc8" stroke="#888"/><path d="m15 16 3 2-3 2m6-5-3 2 3 2" fill="none" stroke="#158a30" stroke-width="1.300"/></svg></button>
    <button class="app" aria-label="Copyright tool"><svg class="i24" viewBox="0 0 24 24"><circle cx="12" cy="12" r="11" fill="#fff" stroke="#0b62b8" stroke-width="1.800"/><path d="M20 9a8 8 0 1 0 0 6M16 10a4 4 0 1 0 0 4M12 12h11" fill="none" stroke="#0b62b8" stroke-width="2"/></svg></button>
    <button class="app active" aria-label="Chrome"><svg class="i24" viewBox="0 0 24 24"><circle cx="12" cy="12" r="12" fill="#fbbc05"/><path d="M1.600 6A12 12 0 0 1 22.400 6H12v6z" fill="#ea4335"/><path d="M1.600 6A12 12 0 0 0 12 24l5-9H7z" fill="#34a853"/><circle cx="12" cy="12" r="6" fill="#fff"/><circle cx="12" cy="12" r="4.700" fill="#4285f4"/></svg></button>
    <button class="app run" aria-label="Outlook"><svg class="i24" viewBox="0 0 24 24"><path d="M3 9 15 1l8 8v14H6z" fill="#2a8be8"/><path d="m3 9 12-8 4 4-14 9z" fill="#1553b5"/><path d="M6 23 23 9v14z" fill="#65c4fa"/><rect y="11" width="12" height="12" rx="2" fill="#0f5fc0"/><circle cx="6" cy="17" r="3" fill="none" stroke="#fff" stroke-width="1.500"/></svg></button>
    <button class="app run" aria-label="OneNote"><svg class="i24" viewBox="0 0 24 24"><rect x="4" y="1" width="20" height="22" rx="3" fill="#ca64e8"/><path d="M13 12h11v9q0 2-2 2h-9z" fill="#9332bf"/><path d="M14 1h8q2 0 2 2v9H14z" fill="#e39df5"/><rect y="11" width="12" height="12" rx="2" fill="#8120a5"/><path d="M3.500 20v-6l5 6v-6" fill="none" stroke="#fff" stroke-width="1.500"/></svg></button>
    <button class="app run" aria-label="Capture"><svg class="i24" viewBox="0 0 24 24"><rect x="1" y="1" width="22" height="22" rx="4" fill="#2c0d58"/><path d="M18 6h-7q-5 0-5 5t5 5h1m3-4h-4m4-4v9q0 2 3 2M13 12h5" fill="none" stroke="#e8dcff" stroke-width="1.800"/></svg></button>
    <button class="app run" aria-label="Excel"><svg class="i24" viewBox="0 0 24 24"><path d="M4 0h20v24H4z" fill="#2f9e3f"/><path d="M14 0h10v8H14z" fill="#b5e86a"/><path d="M14 15h10v9H6z" fill="#187a33"/><rect y="10" width="13" height="13" rx="2" fill="#10512c"/><path d="m4 13 5 7m0-7-5 7" stroke="#fff" stroke-width="1.600"/></svg></button>
    <button class="app run" aria-label="Calculator"><svg class="i24" viewBox="0 0 24 24"><rect x="2" width="20" height="24" rx="2" fill="#6d7782"/><path d="M5 2h14v5H5z" fill="#4ccbf5"/><path d="M5 10h4v3H5zM10 10h4v3h-4zM15 10h4v3h-4zM5 14h4v3H5zM10 14h4v3h-4zM5 18h4v3H5zM10 18h4v3h-4z" fill="#ddd"/><path d="M15 14h4v7h-4z" fill="#10508c"/></svg></button>
    <button class="app run" aria-label="Acrobat"><svg class="i24" viewBox="0 0 24 24"><rect x="1" y="1" width="22" height="22" rx="4" fill="#b30b00"/><path d="M5 17q8-3 7-12 0 9 8 9-7-1-15 3" fill="none" stroke="#fff" stroke-width="1.800"/></svg></button>
  </div>
  <div class="tray">
    <svg class="i12 up"><use href="#chev"/></svg>
    <svg class="traymic"><use href="#mic"/></svg>
    <svg class="i16" viewBox="0 0 16 16" fill="none" stroke="#222" stroke-width="1.200"><path d="M1 6q7-6 14 0M3.500 8.500q4.500-4 9 0M5.500 11q2.500-2 5 0"/><circle cx="8" cy="13" r="1"/></svg>
    <svg class="i16" viewBox="0 0 16 16" fill="none" stroke="#222" stroke-width="1.200"><path d="M1 6h2l4-4v12l-4-4H1zM9 6q1 2 0 4m2-6q3 4 0 8m2-10q4 6 0 12"/></svg>
    <svg class="batt" viewBox="0 0 20 16"><rect x="1" y="4" width="16" height="10" rx="2" fill="#168a16" stroke="#222"/><path d="M18 7h1.500v4H18z" fill="#222"/><path d="M9 0v9M6 6l3 3 3-3" fill="none" stroke="#111" stroke-width="1.500"/></svg>
    <div class="clock"><span>11:45 AM</span><span>3/24/2026</span></div>
  </div>
</footer>
</body>
</html>
```
FILE: styles.css
```css
* { box-sizing: border-box; }
body {
  margin: 0; height: 100vh; overflow: hidden;
  display: flex; flex-direction: column;
  font-family: "Open Sans", "Noto Sans", sans-serif; font-size: 12px; color: #222;
  background: #eee;
}
a { color: inherit; text-decoration: none; }
button, input { font: inherit; color: inherit; }
button { cursor: pointer; }
svg { flex: none; display: block; }
.defs { display: none; }
.plain { border: 0; background: none; padding: 0; display: flex; }
.i8 { width: 8px; height: 8px; } .i10 { width: 10px; height: 10px; } .i12 { width: 12px; height: 12px; }
.i14 { width: 14px; height: 14px; } .i16 { width: 16px; height: 16px; } .i18 { width: 18px; height: 18px; }
.i24 { width: 24px; height: 24px; } .i26 { width: 26px; height: 26px; } .i30 { width: 30px; height: 30px; } .i32 { width: 32px; height: 30px; }
.red { color: #d0271d; }
.down, .up { transform: rotate(180deg); } .left { transform: rotate(-90deg); } .right { transform: rotate(90deg); }

.desktop { flex: 1; min-height: 0; display: grid; grid-template-columns: 1fr 1fr; }
.window { min-width: 0; min-height: 0; display: flex; flex-direction: column; border: 1px solid #7a7a7a; overflow: hidden; }

/* browser chrome */
.chrome { background: #fff; }
.tabstrip { height: 39px; background: #d3e2fd; display: flex; align-items: center; padding-left: 12px; flex: none; }
.tab { align-self: flex-end; height: 34px; width: 232px; background: #fff; border-radius: 10px 10px 0 0; display: flex; align-items: center; gap: 8px; padding: 0 8px 4px; }
.tab-title { flex: 1; overflow: hidden; white-space: nowrap; mask-image: linear-gradient(90deg, #000 88%, transparent); margin-right: -4px; }
.newtab { margin-left: 12px; }
.winbtns { margin-left: auto; display: flex; gap: 34px; padding-right: 17px; }
.toolbar { height: 46px; flex: none; display: flex; align-items: center; padding: 0 14px 0 14px; gap: 20px; }
.omnibox { flex: 1; min-width: 0; height: 34px; border-radius: 17px; background: #ecf1fa; display: flex; align-items: center; padding: 0 16px 0 5px; gap: 16px; margin: 0 -3px 0 -2px; }
.site { width: 24px; height: 24px; border-radius: 12px; background: #fff; display: grid; place-items: center; margin-right: -8px; }
.url { flex: 1; font-size: 13px; color: #474747; white-space: nowrap; overflow: hidden; text-overflow: ellipsis; }
.url b { font-weight: 400; color: #1f1f1f; }
.vsep { width: 2px; height: 16px; background: #c8dcfa; flex: none; }
.toolbar > .vsep { margin: 0 -2px; }
.bookmarks { height: 35px; flex: none; display: flex; align-items: center; padding: 0 28px 6px 13px; gap: 14px; border-bottom: 1px solid #ddd; color: #444; }
.bookmarks a { display: flex; align-items: center; gap: 6px; white-space: nowrap; }
.more { margin-left: auto; }

.viewport { flex: 1; min-height: 0; display: grid; grid-template: 1fr 15px / 1fr 15px; }
.page { position: relative; overflow: hidden; min-width: 0; background: #fff; font-family: Inter, "Open Sans", sans-serif; color: #000; }
.vbar, .hbar, .xvbar, .xhbar { display: flex; align-items: center; color: #8b8b8b; background: #fcfcfc; }
.vbar { flex-direction: column; padding: 4px 0 2px; }
.vbar i { width: 9px; border-radius: 5px; background: #8b8b8b; height: 70%; margin: 106px 0 auto; }
.hbar { padding: 0 3px; }
.hbar i { height: 9px; border-radius: 5px; background: #8b8b8b; width: 81%; margin: 0 auto 0 5px; }

.adphead { height: 72px; background: #131c4e; color: #fff; display: flex; align-items: center; padding: 0 15px 0 16px; }
.adplogo { width: 32px; height: 18px; margin-right: 15px; }
.fdi { width: 42px; height: 42px; margin-right: 7px; }
.brand { width: 118px; border-left: 1px solid #fff; padding-left: 7px; display: flex; flex-direction: column; gap: 3px; height: 42px; justify-content: center; white-space: nowrap; flex: none; }
.brand strong { font: 400 19px/20px "Liberation Serif", serif; }
.brand span { font: 9px/10px "Liberation Sans", sans-serif; }
.asksearch { flex: 1; max-width: 374px; height: 51px; border-radius: 26px; background: #fff; display: flex; align-items: center; padding: 0 8px 0 24px; }
.asksearch input { flex: 1; min-width: 0; border: 0; background: none; padding: 0; margin-left: 17px; font-family: "Liberation Sans", Arial, sans-serif; font-size: 16px; }
.asksearch input::placeholder { color: #777; }
.askmic { width: 16px; height: 18px; color: #334fa5; margin-right: 20px; }
.go { width: 36px; height: 36px; border: 0; border-radius: 18px; background: #ccc7c1; display: grid; place-items: center; padding: 0; }
.headnav { margin-left: auto; display: flex; gap: 16px; font-size: 10px; line-height: 14px; font-weight: 600; }
.headnav a { display: flex; flex-direction: column; align-items: center; gap: 5px; white-space: nowrap; }

.content { padding: 72px 28px 0; }
h1 { margin: 0; font-size: 36px; line-height: 44px; font-weight: 700; }
.meta { display: flex; margin-top: 15px; height: 43px; }
.sheeticon { width: 22px; height: 20px; margin: 1px 10px 0 0; }
.wname { width: 182px; }
h2 { margin: 0; font-size: 19px; line-height: 24px; font-weight: 400; }
.wname p { margin: 7px 0 0; color: #777; font-size: 12px; line-height: 16px; display: flex; gap: 4px; align-items: center; }
dl { margin: 3px 0 0; font-size: 12px; line-height: 16px; }
dt { color: #777; font-size: 11px; line-height: 14px; }
dd { margin: 0; }
.company { width: 157px; }
.status dd { display: flex; align-items: center; margin-left: -12px; }
.warn { width: 12px; height: 12px; }
.showrow { display: flex; justify-content: flex-end; border-bottom: 1px solid #b5b5b5; padding-right: 6px; margin-bottom: 10px; color: #334fa5; font-size: 14px; line-height: 18px; font-weight: 600; }
.showrow a { display: flex; align-items: center; gap: 5px; }
.gridbar { border-top: 2px solid #8a00a8; background: #e3e3e3; height: 39px; display: flex; align-items: flex-start; padding: 0 6px 0 4px; }
.gridbar > button { height: 34px; padding: 0 13px; border: 1px solid #d3dfe2; border-top: 0; background: none; font-size: 14px; font-weight: 600; display: flex; align-items: center; gap: 4px; }
.gridbar > button + button { border-left: 0; }
.gridbar i { border: 4px solid transparent; border-top: 5px solid #000; border-bottom: 0; }
.gridbar input { margin-left: auto; width: 243px; height: 36px; border: 1px solid #888; border-radius: 6px; background: #fff; padding: 0 7px; font-size: 13px; font-style: italic; }
.gridbar .find { width: 27px; height: 25px; border: 0; padding: 0; background: #486cc8; color: #fff; display: grid; place-items: center; }
.gridbar a { display: flex; align-items: center; gap: 5px; margin-left: 15px; height: 36px; color: #334fa5; font-size: 14px; }
.gridbox { border: 1px solid #b5b5b5; border-width: 0 1px 1px; }
.wtable { width: 100%; table-layout: fixed; border-collapse: separate; border-spacing: 0; font-size: 12px; line-height: 14px; }
.w1 { width: 69px; } .w2 { width: 127px; } .w3 { width: 126px; } .w4 { width: 72px; } .w5 { width: 90px; } .w6 { width: 86px; } .w7 { width: 85px; }
.wtable th { height: 29px; background: #bababa; border: 1px solid #000; border-width: 1px 0; border-right: 1px solid #777; text-align: left; font-size: 11px; font-weight: 700; padding: 0 3px 3px; white-space: nowrap; }
.wtable th:last-child { border-right: 0; }
.wtable .r { text-align: right; padding-right: 3px; }
.sort { display: flex; justify-content: space-between; align-items: center; }
.wtable td { height: 22px; padding: 0 3px; border: 1px solid #b5b5b5; border-width: 0 1px 1px 0; white-space: nowrap; }
.wtable .hov td, .wtable .alt td { height: 23px; }
.wtable tr > :first-child { border-right-color: #000; }
.wtable a { color: #334fa5; }
.sel td { background: #bacff5; color: #486cc8; }
.wtable .sel a { color: #fff; font-weight: 500; }
.hov td { background: #9ab7ee; }
.alt td { background: #f1f1f1; }
.wtable .blank td { border-width: 0 0 1px; border-color: #000; }
.wtable td.edit, .wtable td.mine { padding: 0; background: #fff; color: #333; }
.wtable input { display: block; width: 100%; height: 21px; border: 1px solid #3a8ba0; background: #fff; text-align: right; padding: 0 3px; }
.wtable .edit input { border: 2px solid #000; }
.wtable .neg { color: #f00; }
.count { margin: 7px 0 0; font-size: 11px; line-height: 16px; font-style: italic; }
.actions { display: flex; align-items: center; gap: 9px; margin-top: 14px; padding-right: 4px; }
.actions a { margin-right: auto; color: #334fa5; font-size: 14px; padding-bottom: 4px; }
.actions button { height: 36px; border: 1px solid #334fa5; border-radius: 6px; background: #fff; color: #334fa5; font-size: 13px; font-weight: 600; padding: 0 12px 0 18px; }
.actions .primary { background: #334fa5; color: #fff; }
.help { position: absolute; right: 0; top: 677px; width: 36px; height: 128px; border: 0; border-radius: 6px 0 0 6px; background: #486cc8; color: #fff; padding: 9px 0 0; display: flex; flex-direction: column; align-items: center; gap: 9px; font-size: 14px; font-weight: 600; }
.help span { writing-mode: vertical-rl; }

/* spreadsheet */
.excel { background: #efefef; position: relative; }
.excel::after { content: ""; position: absolute; inset: 0 auto 0 0; width: 40px; pointer-events: none; background: linear-gradient(90deg, rgba(0,0,0,.26), rgba(0,0,0,.07) 45%, transparent); }
.xtitle { height: 49px; flex: none; display: flex; align-items: center; padding: 0 18px 0 16px; color: #b0b0b0; }
.auto { display: flex; align-items: center; gap: 8px; margin: 0 13px 0 16px; font-size: 11px; }
.toggle { width: 45px; height: 20px; border: 1px solid #b5b5b5; border-radius: 10px; display: flex; align-items: center; justify-content: space-between; padding: 0 2px 0 6px; }
.toggle input { appearance: none; width: 14px; height: 14px; border-radius: 7px; background: #b8b8b8; margin: 0; }
.undo { width: 28px; height: 16px; margin-left: 12px; }
.qat { margin: 0 24px 0 14px; }
.doc { white-space: nowrap; margin-right: 12px; font-size: 11px; }
.saved { margin: 0 6px 0 9px; white-space: nowrap; font-size: 11px; }
.pale { color: #aaa; }
.xright { margin-left: auto; display: flex; align-items: center; gap: 36px; }
.avatar { width: 24px; height: 24px; margin-right: -6px; }
.xmenu { height: 29px; flex: none; display: flex; align-items: center; padding: 0 12px 0 22px; font-size: 13px; }
.xmenu nav { flex: 1; display: flex; justify-content: space-between; margin-right: 15px; }
.xmenu nav a { line-height: 20px; border-bottom: 2px solid transparent; white-space: nowrap; }
.xmenu nav .on { font-weight: 600; border-color: #107c41; }
.xmenu .file { margin-right: 6px; }
.cmt { width: 24px; height: 24px; border: 1px solid #777; border-radius: 4px; background: #fff; padding: 0; display: grid; place-items: center; margin-right: 8px; }
.share { width: 32px; height: 24px; border: 0; border-radius: 4px; background: #107c41; color: #fff; padding: 0; display: flex; align-items: center; justify-content: center; gap: 4px; }
.ribbon { flex: none; margin: 0 8px; height: 100px; background: #fff; border-radius: 8px; box-shadow: 0 1px 3px rgba(0,0,0,.25); display: flex; position: relative; overflow: hidden; }
.g { flex: none; border: 0; background: linear-gradient(#ccc, #ccc) right 50% / 1px 90px no-repeat; padding: 7px 0 0; display: flex; flex-direction: column; align-items: center; position: relative; line-height: 16px; white-space: nowrap; }
.g > svg:first-child { margin-bottom: 3px; }
.g .i10 { margin-top: 3px; }
.cap { position: absolute; bottom: 2px; color: #222; left: 0; right: 0; text-align: center; font-size: 11px; }
.off, .g5 button { color: #b0b0b0; }
.g button { border: 0; background: none; padding: 0; display: flex; align-items: center; gap: 4px; height: 20px; margin-bottom: 6px; }
.g1 { width: 73px; } .g2 { width: 55px; } .g3 { width: 74px; } .g4 { width: 62px; }
.g5 { width: 184px; align-items: flex-start; padding-left: 12px; }
.g6, .g7 { width: 55px; } .g8 { width: 74px; } .g9 { width: 63px; }
.g10 { width: 88px; padding-left: 12px; align-items: flex-start; }
.g11 { width: 71px; }
.g11 span { display: flex; align-items: center; gap: 3px; }
.g12 { flex: 1; min-width: 0; overflow: hidden; background: none; align-items: flex-start; padding-left: 10px; }
.g12 svg { margin-left: 16px; }
.g12 .l2 { margin-left: 20px; }
.g12 .cap { text-align: left; left: 7px; }
.scroll { width: 24px; flex: none; border: 1px solid #777; background: #fff; padding: 0; display: grid; place-items: center; }
.scroll svg { transform: rotate(-90deg); }
.collapse { width: 28px; flex: none; border: 0; background: none; padding: 0 0 8px; display: flex; align-items: flex-end; justify-content: center; }
.fbar { flex: none; display: flex; align-items: center; padding: 8px 8px 3px; }
.box { height: 26px; border: 1px solid #ccc; border-radius: 4px; background: #fff; display: flex; align-items: center; padding: 0 5px; }
.box input { flex: 1; min-width: 0; border: 0; background: none; padding: 0; font-size: 13px; }
.name { width: 102px; }
.dots { width: 4px; height: 12px; margin: 0 8px; }
.fx { width: 87px; gap: 7px; margin-right: 5px; justify-content: space-between; color: #777; }
.fx em { font: italic 18px/20px "Liberation Serif", serif; color: #222; }
.formula { flex: 1; padding: 0 3px 0 9px; }
.sheetarea { flex: 1; min-height: 0; display: flex; }
.sheet { flex: 1; min-width: 0; overflow: hidden; }
.xl { width: 100%; table-layout: fixed; border-collapse: separate; border-spacing: 0; background: #fff; font-family: Lato, "Open Sans", sans-serif; font-size: 14px; line-height: 20px; color: #000; }
.c0 { width: 24px; } .cA { width: 103px; } .cB { width: 13px; } .cC { width: 69px; } .cD { width: 28px; } .cE { width: 56px; } .cF { width: 35px; } .cG { width: 49px; } .cH { width: 84px; } .cJ { width: 97px; } .cK { width: 83px; } .cL { width: 21px; }
.xl th { background: #efefef; font: 400 14px/14px "Liberation Serif", serif; color: #444; padding: 0; border: 1px solid #d8d8d8; border-width: 0 1px 1px 0; }
.xl thead th { height: 22px; vertical-align: bottom; border-bottom-color: #a0a0a0; }
.xl tbody th { vertical-align: bottom; border-right-color: #a0a0a0; }
.xl td { padding: 0 2px; vertical-align: top; border: 1px solid #ddd; border-width: 0 1px 1px 0; white-space: nowrap; overflow: hidden; }
.xl .k { border-color: #000; } .xl .kb { border-bottom-color: #000; }
.h17 { height: 17px; } .h21 { height: 21px; } .h22 { height: 22px; } .h25 { height: 25px; } .h26 { height: 26px; } .h32 { height: 32px; } .h34 { height: 34px; } .h36 { height: 36px; } .h44 { height: 44px; } .h97 { height: 97px; }
.lock { background: #d0cece; }
.xl .green { background: #c6efce; color: #006100; }
.xl .in { background: #d9e1f2; }
.xl .title { font-size: 19px; line-height: 30px; font-weight: 700; padding-left: 3px; }
.xl .per { font-size: 16px; line-height: 24px; font-style: italic; padding-left: 3px; }
.xl .wk { text-align: right; padding-right: 11px; }
.xl .wn { padding-right: 17px; }
.xl .c { text-align: center; } .xl .n { text-align: right; padding-right: 1px; font-size: 13px; } .xl .b { font-weight: 700; font-size: 13px; }
.xl .date { font-size: 13px; padding-left: 1px; }
.xl .who { font-weight: 700; font-style: italic; }
.xl .adm { color: #ffc000; } .xl .pay { color: #ed7d31; }
.xl .who.p { padding-left: 11px; } .xl .pay.p { padding-left: 20px; }
.xl .hd { background: #bfbfbf; font-weight: 700; vertical-align: middle; text-align: center; } .xl .hd.l { text-align: left; }
.xl .hd:nth-child(2) { padding-right: 18px; }
.xl .top { font-weight: 700; padding-left: 11px; padding-right: 0; }
.yel { background: #fff2cc; } .pch { background: #fce4d6; }
.xl .tot { background: #bfbfbf; text-align: center; padding: 0; }
.tot div { height: 96px; overflow: hidden; } .tot i { font-weight: 400; }
.xl .mid { vertical-align: middle; }
.xvbar { width: 22px; flex-direction: column; color: #6f6f6f; background: #f4f4f4; padding: 8px 0 0; }
.xvbar i { width: 9px; border-radius: 5px; background: #6f6f6f; height: 49%; margin: auto 0 8px; }
.tabsbar { height: 33px; flex: none; border-top: 1px solid #ccc; display: flex; align-items: center; padding: 0 18px 0 26px; gap: 20px; }
.sheettab { align-self: flex-start; width: 61px; height: 28px; border: 1px solid #ddd; border-top: 0; background: #fff; border-radius: 0 0 5px 5px; font-size: 13px; font-weight: 700; text-align: center; line-height: 24px; margin-left: 26px; }
.sheettab span { display: inline-block; border-bottom: 2px solid #107c41; line-height: 22px; }
.addsheet { margin-left: 24px; }
.tabsbar .dots { margin: 0 0 0 auto; }
.xhbar { width: 346px; color: #6f6f6f; gap: 4px; background: #f6f6f6; padding: 0 4px; margin-left: -8px; height: 16px; border-radius: 8px; }
.xhbar i { height: 9px; border-radius: 5px; background: #6f6f6f; flex: 1; margin-right: 12px; }
.statusbar { height: 22px; flex: none; border-top: 1px solid #fff; background: #f3f3f3; display: flex; align-items: center; padding: 0 19px 2px 12px; font-size: 11px; }
.statusbar > svg { margin-left: 30px; } .statusbar > svg + svg { margin: 0 5px 0 18px; }
.statusbar b { font-weight: 600; }
.views { margin-left: auto; display: flex; align-items: center; gap: 26px; color: #b5b5b5; }
.zoom { display: flex; align-items: center; gap: 4px; margin: 0 -12px 0 -6px; }
.zoom input { appearance: none; width: 102px; height: 1px; background: #555; margin: 0; }
.zoom input::-webkit-slider-thumb { appearance: none; width: 1px; height: 7px; background: #555; }

/* taskbar */
.taskbar { height: 48px; flex: none; display: flex; align-items: center; background: #eee; padding: 0 19px 0 19px; line-height: 16px; }
.weather { flex: 1; display: flex; align-items: center; gap: 3px; }
.cloud { width: 28px; height: 30px; }
.weather div, .clock { display: flex; flex-direction: column; }
.dim { color: #666; }
.apps { display: flex; align-items: center; gap: 4px; }
.app { width: 40px; height: 40px; border: 0; border-radius: 4px; background: none; padding: 0; display: grid; place-items: center; position: relative; }
.tsearch { width: 218px; height: 32px; border-radius: 16px; background: #fafafa; border: 1px solid #ddd; display: flex; align-items: center; gap: 10px; padding: 0 10px; margin: 0 1px 0 2px; }
.tsearch input { flex: 1; min-width: 0; border: 0; background: none; padding: 0; font-size: 13px; }
.run::after, .active::after, .alert::after { content: ""; position: absolute; bottom: 0; left: 17px; width: 6px; height: 3px; border-radius: 2px; background: #888; }
.active { background: #fafafa; box-shadow: 0 0 0 1px #e2e2e2; }
.active::after { left: 12px; width: 16px; background: #0078d4; }
.alert { background: #eaacaa; }
.alert::after { left: 4px; width: 32px; background: #c42b1c; }
.badge { position: absolute; top: 2px; right: 3px; width: 16px; height: 16px; border-radius: 8px; background: #c42b1c; color: #fff; font-size: 11px; }
.tray { flex: 1; display: flex; justify-content: flex-end; align-items: center; gap: 8px; }
.traymic { width: 16px; height: 18px; color: #3a6ab5; margin: 0 8px 0 10px; }
.batt { width: 20px; height: 16px; margin-right: 6px; }
.clock { text-align: right; width: 58px; }
```
